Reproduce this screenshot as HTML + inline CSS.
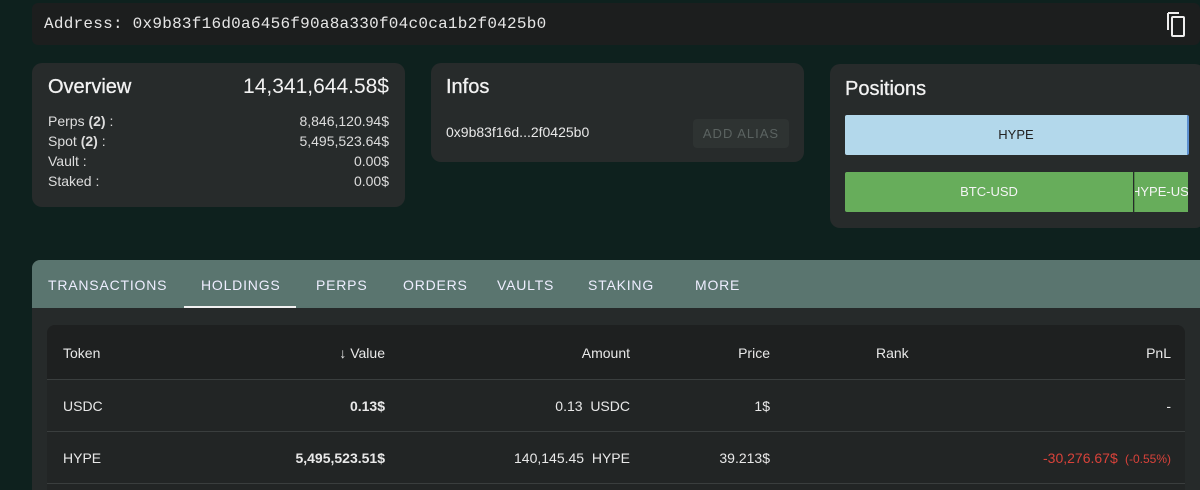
<!DOCTYPE html>
<html><head><style>
*{box-sizing:border-box;margin:0;padding:0}
html,body{width:1200px;height:490px;overflow:hidden}
body{background:#0e211e;font-family:"Liberation Sans",sans-serif;color:#e8e8e8;position:relative}
.abs{position:absolute}
.card{position:absolute;background:#272b2b;border-radius:10px}
.addr{left:32px;top:3px;width:1168px;height:42px;background:#1c1e1e;border-radius:6px;font-family:"Liberation Mono",monospace;font-size:16px;color:#e6e6e6;padding:12px 0 0 12px;letter-spacing:0.25px}
.ov{left:32px;top:63px;width:373px;height:144px}
.row{display:flex;justify-content:space-between;font-size:14px;line-height:20px;color:#ddd}
.tabs{left:32px;top:260px;width:1168px;height:230px;background:#262a2a;border-radius:8px 0 0 0;overflow:hidden}
.th{height:48px;background:#5a756f;position:relative}
.tab{position:absolute;top:17px;font-size:14px;letter-spacing:0.8px;color:#eef}
.ttl{font-size:20px;color:#f2f2f2;-webkit-text-stroke:0.3px #f2f2f2}
</style></head><body>
<div class="abs addr">Address: 0x9b83f16d0a6456f90a8a330f04c0ca1b2f0425b0</div>
<svg class="abs" style="left:1165px;top:12px" width="24" height="26" viewBox="0 0 24 26"><path d="M3 1h11M3 1v17" stroke="#eee" stroke-width="2" fill="none"/><rect x="7" y="5" width="12" height="19" rx="1" stroke="#eee" stroke-width="2" fill="none"/></svg>

<div class="card ov" style="padding:12px 16px">
 <div style="display:flex;justify-content:space-between;align-items:baseline"><span class="ttl">Overview</span><span style="font-size:21px;color:#f2f2f2">14,341,644.58$</span></div>
 <div style="margin-top:12px">
 <div class="row"><span>Perps <b>(2)</b> :</span><span>8,846,120.94$</span></div>
 <div class="row"><span>Spot <b>(2)</b> :</span><span>5,495,523.64$</span></div>
 <div class="row"><span>Vault :</span><span>0.00$</span></div>
 <div class="row"><span>Staked :</span><span>0.00$</span></div>
 </div>
</div>

<div class="card" style="left:431px;top:63px;width:373px;height:99px">
 <div class="abs ttl" style="left:15px;top:13px">Infos</div>
 <div class="abs" style="left:15px;top:61px;font-size:14px">0x9b83f16d...2f0425b0</div>
 <div class="abs" style="left:262px;top:56px;width:96px;height:29px;background:#2e3332;border-radius:4px;font-size:13px;color:#5b6361;letter-spacing:1px;text-align:center;line-height:29px">ADD ALIAS</div>
</div>

<div class="card" style="left:830px;top:64px;width:375px;height:164px">
 <div class="abs ttl" style="left:15px;top:14px">Positions</div>
 <div class="abs" style="left:15px;top:51px;width:344px;height:40px;background:#b3d8eb;border-right:2px solid #5b8fd0;border-radius:2px;color:#222;font-size:13px;text-align:center;line-height:40px">HYPE</div>
 <div class="abs" style="left:15px;top:108px;width:288px;height:40px;background:#67ad5b;border-radius:2px 0 0 2px;color:#f4f4f4;font-size:13px;text-align:center;line-height:40px">BTC-USD</div>
 <div class="abs" style="left:304px;top:108px;width:54px;height:40px;background:#67ad5b;border-left:1px solid #4e8a44;color:#f4f4f4;font-size:13px;line-height:40px;overflow:hidden;white-space:nowrap;text-indent:-4px">HYPE-USD</div>
</div>

<div class="abs tabs">
 <div class="th">
  <span class="tab" style="left:16px">TRANSACTIONS</span>
  <span class="tab" style="left:169px">HOLDINGS</span>
  <span class="tab" style="left:284px">PERPS</span>
  <span class="tab" style="left:371px">ORDERS</span>
  <span class="tab" style="left:465px">VAULTS</span>
  <span class="tab" style="left:556px">STAKING</span>
  <span class="tab" style="left:663px">MORE</span>
  <div class="abs" style="left:152px;top:46px;width:112px;height:2px;background:#f0f0f0"></div>
 </div>
 <div class="abs" style="left:15px;top:65px;width:1138px;height:165px;background:#222525;border-radius:8px 8px 0 0;overflow:hidden">
  <div style="height:55px;background:#1e2020;border-bottom:1px solid #3a3e3e;position:relative;font-size:14px">
   <span class="abs" style="left:16px;top:20px">Token</span>
   <span class="abs" style="right:800px;top:20px">&#8595; Value</span>
   <span class="abs" style="right:555px;top:20px">Amount</span>
   <span class="abs" style="right:415px;top:20px">Price</span>
   <span class="abs" style="left:829px;top:20px">Rank</span>
   <span class="abs" style="right:14px;top:20px">PnL</span>
  </div>
  <div style="height:52px;border-bottom:1px solid #3a3e3e;position:relative;font-size:14px">
   <span class="abs" style="left:16px;top:18px">USDC</span>
   <span class="abs" style="right:800px;top:18px;font-weight:bold">0.13$</span>
   <span class="abs" style="right:555px;top:18px">0.13&nbsp;&nbsp;USDC</span>
   <span class="abs" style="right:415px;top:18px">1$</span>
   <span class="abs" style="right:14px;top:18px">-</span>
  </div>
  <div style="height:52px;border-bottom:1px solid #3a3e3e;position:relative;font-size:14px">
   <span class="abs" style="left:16px;top:18px">HYPE</span>
   <span class="abs" style="right:800px;top:18px;font-weight:bold">5,495,523.51$</span>
   <span class="abs" style="right:555px;top:18px">140,145.45&nbsp;&nbsp;HYPE</span>
   <span class="abs" style="right:415px;top:18px">39.213$</span>
   <span class="abs" style="right:14px;top:18px;color:#d8423a">-30,276.67$ <span style="font-size:12px">&nbsp;(-0.55%)</span></span>
  </div>
 </div>
</div>
</body></html>
